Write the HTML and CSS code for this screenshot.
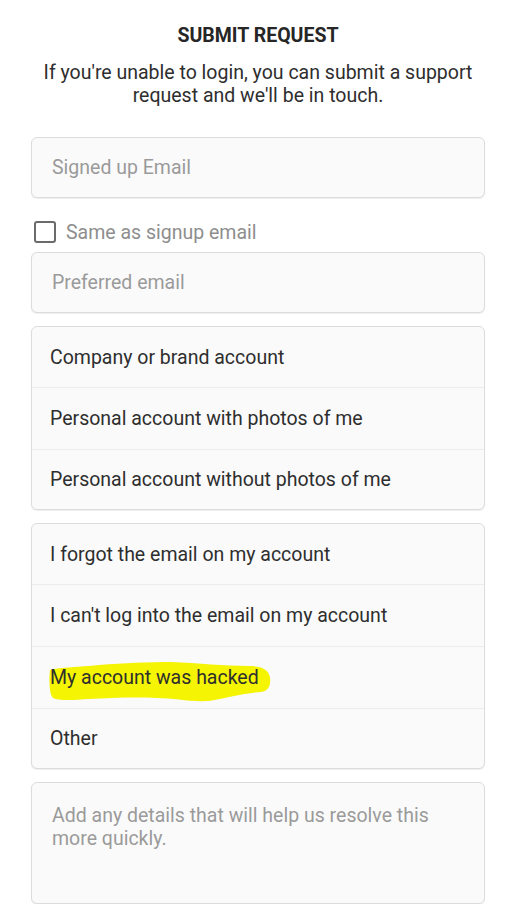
FILE: index.html
```html
<!DOCTYPE html>
<html lang="en">
<head>
    <meta charset="UTF-8">
    <meta name="viewport" content="width=device-width, initial-scale=1.0">
    <title>Submit Request</title>
    <link rel="stylesheet" href="styles.css">
</head>
<body>

<div class="request-form">
    <h2>SUBMIT REQUEST</h2>
    <p class="intro">If you're unable to login, you can submit a support request and we'll be in touch.</p>

    <!-- Email fields -->
    <input type="email" class="input-field" placeholder="Signed up Email">

    <label class="check-row">
        <span class="check-box"></span>
        <span>Same as signup email</span>
    </label>

    <input type="email" class="input-field" placeholder="Preferred email">

    <!-- Account type -->
    <div class="option-list">
        <div class="option">Company or brand account</div>
        <div class="option">Personal account with photos of me</div>
        <div class="option">Personal account without photos of me</div>
    </div>

    <!-- Problem -->
    <div class="option-list">
        <div class="option">I forgot the email on my account</div>
        <div class="option">I can't log into the email on my account</div>
        <div class="option">
            <span class="marker">
                <svg class="marker-ink" viewBox="0 0 222 42" aria-hidden="true">
                    <path d="M1 10 C12 7 30 7 50 5 C75 3 100 2 122 2 C150 3 175 6 200 6 C212 6 219 9 221 17 C222 25 220 31 212 32 C195 33 178 38 160 41 C140 42 125 38 108 38 C85 37 60 38 40 39 C25 40 10 41 4 38 C0 34 0 18 1 10 Z"/>
                </svg>
                My account was hacked
            </span>
        </div>
        <div class="option">Other</div>
    </div>

    <textarea class="input-field details" placeholder="Add any details that will help us resolve this more quickly."></textarea>
</div>

</body>
</html>
```

FILE: styles.css
```css
body {
    font-family: Roboto, 'Liberation Sans', sans-serif;
    background-color: #ffffff;
    margin: 0;
    padding: 0;
    color: #2e2e2e;
}
.request-form {
    padding: 24px 31px 0;
    display: flex;
    flex-direction: column;
}
h2 {
    text-align: center;
    font-size: 19.5px;
    line-height: 24px;
    font-weight: bold;
    margin: 0 0 13px;
    color: #262626;
}
.intro {
    text-align: center;
    font-size: 19.5px;
    line-height: 23px;
    margin: 0 0 30px;
}
.input-field {
    box-sizing: border-box;
    width: 100%;
    height: 61px;
    padding: 0 20px;
    font-family: inherit;
    font-size: 19.5px;
    color: #2e2e2e;
    background-color: #fafafa;
    border: 1px solid #dcdcdc;
    border-radius: 6px;
    box-shadow: 0 1px 1px rgba(0, 0, 0, 0.07);
    margin: 0;
}
.input-field::placeholder {
    color: #9a9a9a;
}
.check-row {
    box-sizing: border-box;
    display: flex;
    align-items: center;
    gap: 10px;
    height: 54px;
    padding: 14px 0 0 3px;
    font-size: 19.5px;
    color: #8e8e8e;
}
.check-box {
    box-sizing: border-box;
    width: 22px;
    height: 22px;
    border: 2px solid #6b6b6b;
    border-radius: 3px;
}
.option-list {
    margin-top: 13px;
    background-color: #fafafa;
    border: 1px solid #dcdcdc;
    border-radius: 6px;
    box-shadow: 0 1px 1px rgba(0, 0, 0, 0.07);
}
.option {
    height: 61px;
    display: flex;
    align-items: center;
    padding: 0 18px;
    font-size: 19.5px;
    border-top: 1px solid #ececec;
}
.option:first-child {
    border-top: none;
    height: 60px;
}
.option:last-child {
    height: 59px;
}
.marker {
    position: relative;
    z-index: 0;
}
.marker-ink {
    position: absolute;
    left: -1px;
    top: -6px;
    width: 222px;
    height: 42px;
    z-index: -1;
    fill: #f4f403;
}
.details {
    margin-top: 13px;
    height: 122px;
    padding: 21px 20px;
    line-height: 23px;
    resize: none;
}
```
